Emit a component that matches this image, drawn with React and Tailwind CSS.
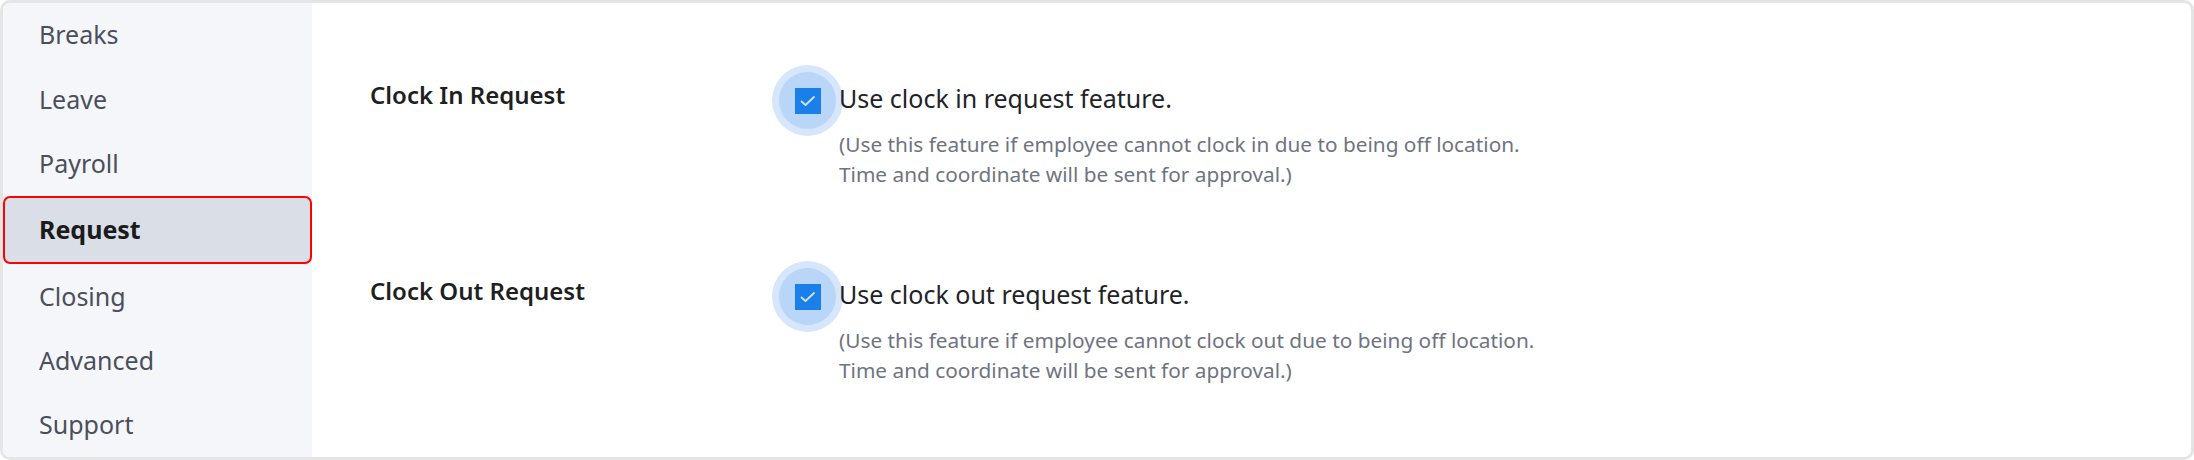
import React from 'react';

const menu = ['Breaks', 'Leave', 'Payroll', 'Request', 'Closing', 'Advanced', 'Support'];

const options = [
  {
    label: 'Clock In Request',
    title: 'Use clock in request feature.',
    lines: [
      '(Use this feature if employee cannot clock in due to being off location.',
      'Time and coordinate will be sent for approval.)',
    ],
  },
  {
    label: 'Clock Out Request',
    title: 'Use clock out request feature.',
    lines: [
      '(Use this feature if employee cannot clock out due to being off location.',
      'Time and coordinate will be sent for approval.)',
    ],
  },
];

const CheckMark = () => (
  <div className="w-[57px] h-[57px] shrink-0 rounded-full bg-[#b9d6f8] shadow-[0_0_0_7px_#d6e6fc] flex items-center justify-center">
    <div className="w-[26px] h-[26px] bg-[#1a7fe8]">
      <svg width="26" height="26" viewBox="0 0 26 26" fill="none">
        <path d="M6.5 13.5l4 3.5L19 9" stroke="#d3e4fa" strokeWidth="1.8" strokeLinecap="round" strokeLinejoin="round" />
      </svg>
    </div>
  </div>
);

export default function App() {
  return (
    <div className="w-[2194px] h-[460px] bg-white font-['Noto_Sans',sans-serif]">
      <div className="h-full border-[3px] border-[#e5e5e5] rounded-[10px] overflow-hidden flex">
        {/* Sidebar */}
        <div className="w-[309px] shrink-0 bg-[#f5f6fa] flex flex-col">
          {menu.map((item) =>
            item === 'Request' ? (
              <div
                key={item}
                className="flex-1 flex items-center pl-[34px] bg-[#d9dee7] border-2 border-[#ff0000] rounded-[7px] text-[25px] font-bold text-[#1b1b1b]"
              >
                {item}
              </div>
            ) : (
              <div key={item} className="flex-1 flex items-center pl-[36px] text-[25px] text-[#4a4f5b]">
                {item}
              </div>
            )
          )}
        </div>

        {/* Content */}
        <div className="flex-1 pl-[58px] pt-[69px]">
          {options.map((opt, i) => (
            <div key={opt.label} className={`flex ${i > 0 ? 'mt-[79px]' : ''}`}>
              <div className="w-[409px] shrink-0 mt-[8px] text-[24px] leading-[30px] font-semibold text-[#1e1f22]">
                {opt.label}
              </div>
              <CheckMark />
              <div className="ml-[3px]">
                <div className="mt-[11px] text-[25px] leading-[30px] text-[#1f2328]">{opt.title}</div>
                <div className="mt-[16px] text-[20.8px] leading-[30px] text-[#6e7480]">
                  {opt.lines.map((l) => (
                    <div key={l}>{l}</div>
                  ))}
                </div>
              </div>
            </div>
          ))}
        </div>
      </div>
    </div>
  );
}
